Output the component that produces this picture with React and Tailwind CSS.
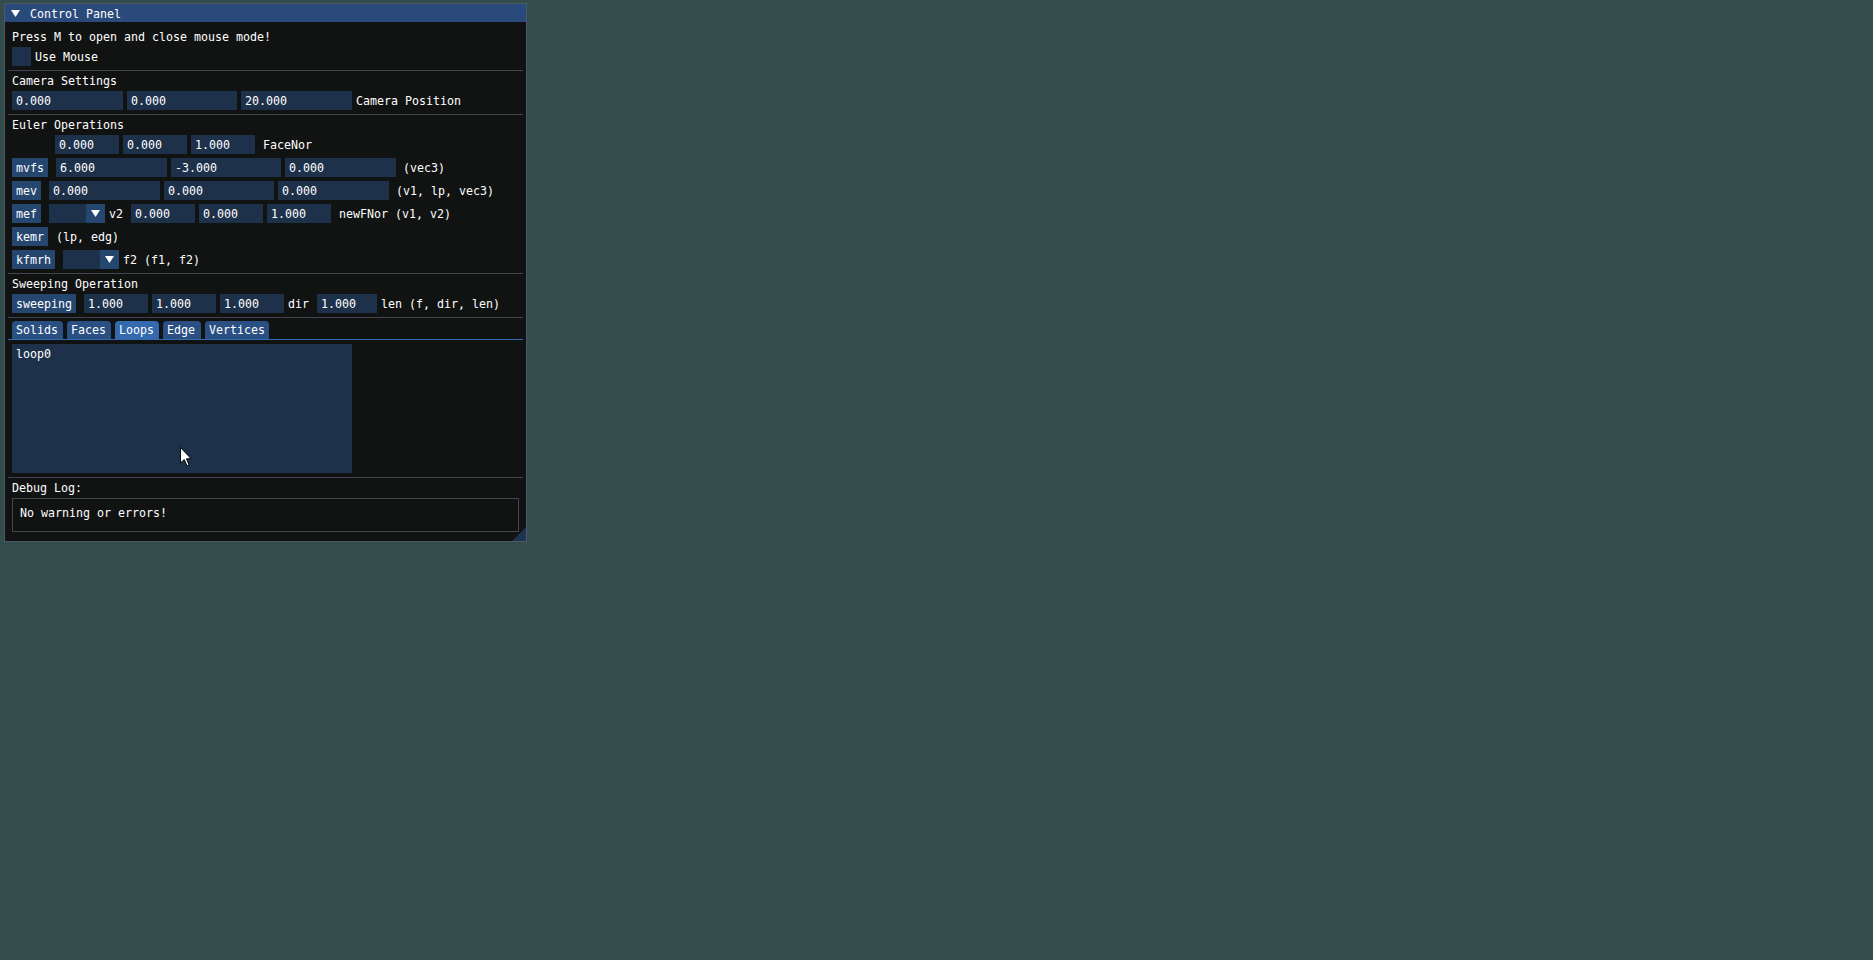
import React from 'react';

const FONT = { fontFamily: '"DejaVu Sans Mono", "Liberation Mono", monospace' };

const Sep = () => <div className="-ml-[4px] w-[515px] h-px bg-[#43444d] -mb-px shrink-0" />;

const Text = ({ children, className = '' }) => (
  <div className={`h-[13px] leading-[15px] whitespace-pre ${className}`}>{children}</div>
);

const Input = ({ w, value }) => (
  <div className={`h-[19px] leading-[21px] pl-[4px] bg-[#1e314b] whitespace-pre shrink-0 ${w}`}>{value}</div>
);

const Button = ({ w, children }) => (
  <div className={`h-[19px] leading-[21px] text-center bg-[#25476f] whitespace-pre shrink-0 ${w}`}>{children}</div>
);

const Arrow = ({ className = '' }) => (
  <svg width="9" height="7" viewBox="0 0 9 7" className={className}>
    <polygon points="0,0 9,0 4.5,7" fill="#ffffff" />
  </svg>
);

const Combo = () => (
  <div className="flex h-[19px] w-[56px] shrink-0">
    <div className="w-[37px] bg-[#1e314b]" />
    <div className="w-[19px] bg-[#25476f] flex items-center justify-center">
      <Arrow />
    </div>
  </div>
);

const Label = ({ ml, children }) => (
  <span className={`leading-[21px] h-[19px] whitespace-pre ${ml}`}>{children}</span>
);

const tabs = [
  { name: 'Solids', w: 'w-[51px]' },
  { name: 'Faces', w: 'w-[44px]' },
  { name: 'Loops', w: 'w-[44px]', active: true },
  { name: 'Edge', w: 'w-[38px]' },
  { name: 'Vertices', w: 'w-[64px]' },
];

export default function App() {
  return (
    <div className="relative w-full h-screen bg-[#334d4d] text-white overflow-hidden text-[11.63px]" style={FONT}>
      {/* ImGui window */}
      <div className="relative ml-[4px] pt-[3px]">
        <div className="relative w-[523px] h-[539px] border border-[#4f5766] bg-[#111313] flex flex-col">
          {/* title bar */}
          <div className="h-[18px] bg-[#294a7a] flex items-center pl-[6px] shrink-0">
            <Arrow />
            <span className="ml-[10px] leading-[15px] h-[13px]">Control Panel</span>
          </div>

          <div className="flex flex-col gap-[4px] pt-[8px] pl-[7px]">
            <Text>Press M to open and close mouse mode!</Text>
            <div className="flex h-[19px]">
              <div className="w-[19px] h-[19px] bg-[#1e314b]" />
              <Label ml="ml-[4px]">Use Mouse</Label>
            </div>
            <Sep />

            <Text>Camera Settings</Text>
            <div className="flex gap-[4px] h-[19px]">
              <Input w="w-[111px]" value="0.000" />
              <Input w="w-[110px]" value="0.000" />
              <Input w="w-[111px]" value="20.000" />
              <Label ml="ml-0">Camera Position</Label>
            </div>
            <Sep />

            <Text>Euler Operations</Text>
            <div className="flex h-[19px] pl-[43px]">
              <div className="flex gap-[4px]">
                <Input w="w-[64px]" value="0.000" />
                <Input w="w-[64px]" value="0.000" />
                <Input w="w-[64px]" value="1.000" />
              </div>
              <Label ml="ml-[8px]">FaceNor</Label>
            </div>
            <div className="flex h-[19px]">
              <Button w="w-[36px]">mvfs</Button>
              <div className="flex gap-[4px] ml-[8px]">
                <Input w="w-[111px]" value="6.000" />
                <Input w="w-[110px]" value="-3.000" />
                <Input w="w-[111px]" value="0.000" />
              </div>
              <Label ml="ml-[7px]">(vec3)</Label>
            </div>
            <div className="flex h-[19px]">
              <Button w="w-[29px]">mev</Button>
              <div className="flex gap-[4px] ml-[8px]">
                <Input w="w-[111px]" value="0.000" />
                <Input w="w-[110px]" value="0.000" />
                <Input w="w-[111px]" value="0.000" />
              </div>
              <Label ml="ml-[7px]">(v1, lp, vec3)</Label>
            </div>
            <div className="flex h-[19px]">
              <Button w="w-[29px]">mef</Button>
              <div className="ml-[8px]">
                <Combo />
              </div>
              <Label ml="ml-[4px]">v2</Label>
              <div className="flex gap-[4px] ml-[8px]">
                <Input w="w-[64px]" value="0.000" />
                <Input w="w-[64px]" value="0.000" />
                <Input w="w-[64px]" value="1.000" />
              </div>
              <Label ml="ml-[8px]">newFNor (v1, v2)</Label>
            </div>
            <div className="flex h-[19px]">
              <Button w="w-[36px]">kemr</Button>
              <Label ml="ml-[8px]">(lp, edg)</Label>
            </div>
            <div className="flex h-[19px]">
              <Button w="w-[43px]">kfmrh</Button>
              <div className="ml-[8px]">
                <Combo />
              </div>
              <Label ml="ml-[4px]">f2 (f1, f2)</Label>
            </div>
            <Sep />

            <Text>Sweeping Operation</Text>
            <div className="flex h-[19px]">
              <Button w="w-[64px]">sweeping</Button>
              <div className="flex gap-[4px] ml-[8px]">
                <Input w="w-[64px]" value="1.000" />
                <Input w="w-[64px]" value="1.000" />
                <Input w="w-[64px]" value="1.000" />
              </div>
              <Label ml="ml-[4px]">dir</Label>
              <div className="ml-[8px]">
                <Input w="w-[60px]" value="1.000" />
              </div>
              <Label ml="ml-[4px]">len (f, dir, len)</Label>
            </div>
            <Sep />

            {/* tab bar */}
            <div className="-ml-[4px] w-[515px] pl-[4px] h-[19px] border-b border-[#3369ad] flex items-end gap-[4px]">
              {tabs.map((t) => (
                <div
                  key={t.name}
                  className={`h-[18px] leading-[19px] pl-[4px] rounded-t-[4px] ${t.w} ${t.active ? 'bg-[#3369ad]' : 'bg-[#2a4f82]'}`}
                >
                  {t.name}
                </div>
              ))}
            </div>
            <div className="w-[340px] h-[129px] bg-[#1e314b] pl-[4px] pt-[3px]">
              <div className="h-[13px] leading-[15px]">loop0</div>
            </div>
            <Sep />

            <Text>Debug Log:</Text>
            <div className="w-[507px] h-[34px] border border-[#45464f] pl-[7px] pt-[7px]">
              <div className="h-[13px] leading-[15px]">No warning or errors!</div>
            </div>
          </div>

          {/* resize grip */}
          <svg width="14" height="14" viewBox="0 0 14 14" className="absolute right-0 bottom-0">
            <polygon points="14,0 14,14 0,14" fill="#1d3350" />
          </svg>
        </div>
      </div>

      {/* mouse cursor */}
      <svg width="12" height="20" viewBox="0 0 12 20" className="absolute left-[180px] top-[447px]">
        <path d="M0.5 0.5 L0.5 16 L4.2 12.6 L7 18.8 L9.1 17.9 L6.5 11.8 L11.2 11.8 Z" fill="#ffffff" stroke="#000000" strokeWidth="1" />
      </svg>
    </div>
  );
}
